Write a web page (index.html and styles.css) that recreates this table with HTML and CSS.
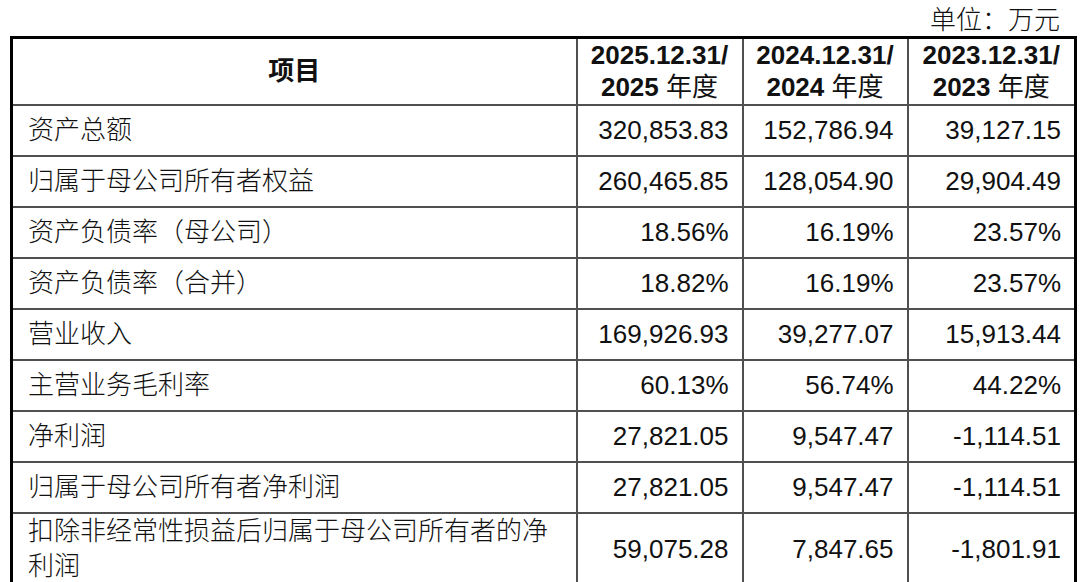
FILE: index.html
```html
<!DOCTYPE html>
<html lang="zh-CN">
<head>
<meta charset="utf-8">
<title>主要财务数据</title>
<link rel="stylesheet" href="styles.css">
</head>
<body>
<div class="unit">单位：万元</div>
<div class="wrap">
<table class="fin">
  <colgroup>
    <col class="c-name">
    <col class="c-a">
    <col class="c-b">
    <col class="c-c">
  </colgroup>
  <thead>
    <tr class="head">
      <th class="h-name">项目</th>
      <th>2025.12.31/<br>2025 <span class="cjk">年度</span></th>
      <th>2024.12.31/<br>2024 <span class="cjk">年度</span></th>
      <th>2023.12.31/<br>2023 <span class="cjk">年度</span></th>
    </tr>
  </thead>
  <tbody>
    <tr><td class="name">资产总额</td><td>320,853.83</td><td>152,786.94</td><td>39,127.15</td></tr>
    <tr><td class="name">归属于母公司所有者权益</td><td>260,465.85</td><td>128,054.90</td><td>29,904.49</td></tr>
    <tr><td class="name">资产负债率（母公司）</td><td>18.56%</td><td>16.19%</td><td>23.57%</td></tr>
    <tr><td class="name">资产负债率（合并）</td><td>18.82%</td><td>16.19%</td><td>23.57%</td></tr>
    <tr><td class="name">营业收入</td><td>169,926.93</td><td>39,277.07</td><td>15,913.44</td></tr>
    <tr><td class="name">主营业务毛利率</td><td>60.13%</td><td>56.74%</td><td>44.22%</td></tr>
    <tr><td class="name">净利润</td><td>27,821.05</td><td>9,547.47</td><td>-1,114.51</td></tr>
    <tr><td class="name">归属于母公司所有者净利润</td><td>27,821.05</td><td>9,547.47</td><td>-1,114.51</td></tr>
    <tr class="tall"><td class="name">扣除非经常性损益后归属于母公司所有者的净利润</td><td>59,075.28</td><td>7,847.65</td><td>-1,801.91</td></tr>
    <tr><td class="name">&nbsp;</td><td>&nbsp;</td><td>&nbsp;</td><td>&nbsp;</td></tr>
  </tbody>
</table>
</div>
</body>
</html>
```

FILE: styles.css
```css
html, body {
  margin: 0;
  padding: 0;
  background: #ffffff;
}

body {
  font-family: "Liberation Sans", "Noto Sans CJK SC", sans-serif;
  color: #111111;
  overflow: hidden;
  height: 582px;
}

.unit {
  height: 36px;
  line-height: 40px;
  font-size: 26px;
  font-weight: 300;
  text-align: right;
  padding-right: 20px;
}

.wrap {
  padding-left: 10px;
}

.fin {
  width: 1064px;
  border-collapse: collapse;
  table-layout: fixed;
  border: 3px solid #000000;
}

.c-name { width: 565px; }
.c-a { width: 166px; }
.c-b { width: 165px; }
.c-c { width: 168px; }

.fin th,
.fin td {
  border: 2px solid #505050;
  font-size: 26px;
  padding: 0 12px;
  vertical-align: middle;
}

.fin th {
  font-weight: 700;
  text-align: center;
  line-height: 32px;
}

.fin .cjk {
  font-weight: 400;
}

.head {
  height: 67px;
}

.fin tbody tr {
  height: 51px;
}

.fin tbody tr.tall {
  height: 70px;
}

.fin td {
  text-align: right;
  line-height: 30px;
  padding-right: 13px;
}

.fin td.name {
  text-align: left;
  font-weight: 300;
  padding-left: 15px;
  line-height: 35px;
}
```
